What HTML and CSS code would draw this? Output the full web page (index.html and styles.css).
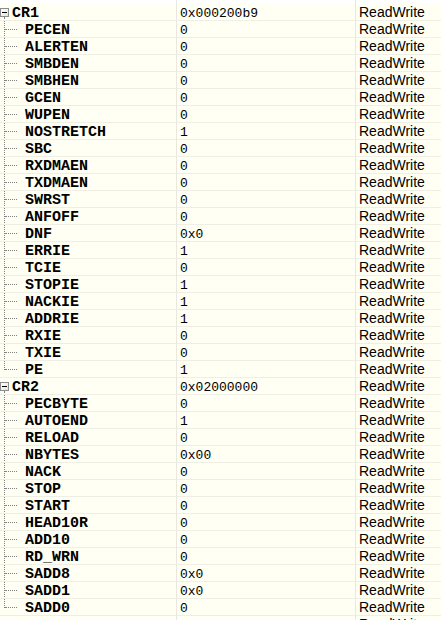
FILE: index.html
```html
<!DOCTYPE html>
<html>
<head>
<meta charset="utf-8">
<link rel="stylesheet" href="styles.css">
</head>
<body>
<div class="grid">
  <div class="row top"><div class="c name"></div><div class="c val"></div><div class="c acc"></div></div>

  <div class="row parent"><div class="c name"><span class="g"><span class="box"></span></span><span class="t">CR1</span></div><div class="c val">0x000200b9</div><div class="c acc">ReadWrite</div></div>
  <div class="row child"><div class="c name"><span class="g"></span><span class="t">PECEN</span></div><div class="c val">0</div><div class="c acc">ReadWrite</div></div>
  <div class="row child"><div class="c name"><span class="g"></span><span class="t">ALERTEN</span></div><div class="c val">0</div><div class="c acc">ReadWrite</div></div>
  <div class="row child"><div class="c name"><span class="g"></span><span class="t">SMBDEN</span></div><div class="c val">0</div><div class="c acc">ReadWrite</div></div>
  <div class="row child"><div class="c name"><span class="g"></span><span class="t">SMBHEN</span></div><div class="c val">0</div><div class="c acc">ReadWrite</div></div>
  <div class="row child"><div class="c name"><span class="g"></span><span class="t">GCEN</span></div><div class="c val">0</div><div class="c acc">ReadWrite</div></div>
  <div class="row child"><div class="c name"><span class="g"></span><span class="t">WUPEN</span></div><div class="c val">0</div><div class="c acc">ReadWrite</div></div>
  <div class="row child"><div class="c name"><span class="g"></span><span class="t">NOSTRETCH</span></div><div class="c val">1</div><div class="c acc">ReadWrite</div></div>
  <div class="row child"><div class="c name"><span class="g"></span><span class="t">SBC</span></div><div class="c val">0</div><div class="c acc">ReadWrite</div></div>
  <div class="row child"><div class="c name"><span class="g"></span><span class="t">RXDMAEN</span></div><div class="c val">0</div><div class="c acc">ReadWrite</div></div>
  <div class="row child"><div class="c name"><span class="g"></span><span class="t">TXDMAEN</span></div><div class="c val">0</div><div class="c acc">ReadWrite</div></div>
  <div class="row child"><div class="c name"><span class="g"></span><span class="t">SWRST</span></div><div class="c val">0</div><div class="c acc">ReadWrite</div></div>
  <div class="row child"><div class="c name"><span class="g"></span><span class="t">ANFOFF</span></div><div class="c val">0</div><div class="c acc">ReadWrite</div></div>
  <div class="row child"><div class="c name"><span class="g"></span><span class="t">DNF</span></div><div class="c val">0x0</div><div class="c acc">ReadWrite</div></div>
  <div class="row child"><div class="c name"><span class="g"></span><span class="t">ERRIE</span></div><div class="c val">1</div><div class="c acc">ReadWrite</div></div>
  <div class="row child"><div class="c name"><span class="g"></span><span class="t">TCIE</span></div><div class="c val">0</div><div class="c acc">ReadWrite</div></div>
  <div class="row child"><div class="c name"><span class="g"></span><span class="t">STOPIE</span></div><div class="c val">1</div><div class="c acc">ReadWrite</div></div>
  <div class="row child"><div class="c name"><span class="g"></span><span class="t">NACKIE</span></div><div class="c val">1</div><div class="c acc">ReadWrite</div></div>
  <div class="row child"><div class="c name"><span class="g"></span><span class="t">ADDRIE</span></div><div class="c val">1</div><div class="c acc">ReadWrite</div></div>
  <div class="row child"><div class="c name"><span class="g"></span><span class="t">RXIE</span></div><div class="c val">0</div><div class="c acc">ReadWrite</div></div>
  <div class="row child"><div class="c name"><span class="g"></span><span class="t">TXIE</span></div><div class="c val">0</div><div class="c acc">ReadWrite</div></div>
  <div class="row child last"><div class="c name"><span class="g"></span><span class="t">PE</span></div><div class="c val">1</div><div class="c acc">ReadWrite</div></div>

  <div class="row parent"><div class="c name"><span class="g"><span class="box"></span></span><span class="t">CR2</span></div><div class="c val">0x02000000</div><div class="c acc">ReadWrite</div></div>
  <div class="row child"><div class="c name"><span class="g"></span><span class="t">PECBYTE</span></div><div class="c val">0</div><div class="c acc">ReadWrite</div></div>
  <div class="row child"><div class="c name"><span class="g"></span><span class="t">AUTOEND</span></div><div class="c val">1</div><div class="c acc">ReadWrite</div></div>
  <div class="row child"><div class="c name"><span class="g"></span><span class="t">RELOAD</span></div><div class="c val">0</div><div class="c acc">ReadWrite</div></div>
  <div class="row child"><div class="c name"><span class="g"></span><span class="t">NBYTES</span></div><div class="c val">0x00</div><div class="c acc">ReadWrite</div></div>
  <div class="row child"><div class="c name"><span class="g"></span><span class="t">NACK</span></div><div class="c val">0</div><div class="c acc">ReadWrite</div></div>
  <div class="row child"><div class="c name"><span class="g"></span><span class="t">STOP</span></div><div class="c val">0</div><div class="c acc">ReadWrite</div></div>
  <div class="row child"><div class="c name"><span class="g"></span><span class="t">START</span></div><div class="c val">0</div><div class="c acc">ReadWrite</div></div>
  <div class="row child"><div class="c name"><span class="g"></span><span class="t">HEAD10R</span></div><div class="c val">0</div><div class="c acc">ReadWrite</div></div>
  <div class="row child"><div class="c name"><span class="g"></span><span class="t">ADD10</span></div><div class="c val">0</div><div class="c acc">ReadWrite</div></div>
  <div class="row child"><div class="c name"><span class="g"></span><span class="t">RD_WRN</span></div><div class="c val">0</div><div class="c acc">ReadWrite</div></div>
  <div class="row child"><div class="c name"><span class="g"></span><span class="t">SADD8</span></div><div class="c val">0x0</div><div class="c acc">ReadWrite</div></div>
  <div class="row child"><div class="c name"><span class="g"></span><span class="t">SADD1</span></div><div class="c val">0x0</div><div class="c acc">ReadWrite</div></div>
  <div class="row child last"><div class="c name"><span class="g"></span><span class="t">SADD0</span></div><div class="c val">0</div><div class="c acc">ReadWrite</div></div>
  <div class="row"><div class="c name"></div><div class="c val"></div><div class="c acc">ReadWrite</div></div>
</div>
</body>
</html>
```

FILE: styles.css
```css
html, body {
  margin: 0;
  padding: 0;
  background: #fffff3;
  overflow: hidden;
}
.grid {
  display: flex;
  flex-direction: column;
  width: 441px;
}
.row {
  display: flex;
  height: 17px;
  flex: none;
}
.row.top {
  height: 4px;
  background: #ffffff;
}
.row.top .c {
  border-bottom: none;
}
.c {
  box-sizing: border-box;
  height: 100%;
  border-bottom: 1px solid #efefe6;
  white-space: nowrap;
  overflow: hidden;
}
.name {
  width: 177px;
  border-right: 1px solid #e8e8e0;
  display: flex;
  align-items: stretch;
  font-family: "Liberation Mono", monospace;
  font-weight: bold;
  font-size: 15px;
  line-height: 16px;
  color: #000;
}
.name .t {
  padding-top: 2px;
}
.val {
  width: 179px;
  border-right: 1px solid #e8e8e0;
  padding-left: 3px;
  padding-top: 2px;
  font-family: "Liberation Mono", monospace;
  font-size: 13px;
  line-height: 15px;
  color: #000;
}
.acc {
  flex: 1;
  padding-left: 3px;
  font-family: "Liberation Sans", Arial, sans-serif;
  font-size: 14px;
  line-height: 17px;
  color: #000;
}
.g {
  position: relative;
  flex: none;
  height: 17px;
}
.parent .g {
  width: 12px;
}
.child .g {
  width: 25px;
}
.child .g::before {
  content: "";
  position: absolute;
  left: 4px;
  top: -1px;
  height: 18px;
  border-left: 1px dotted #808080;
}
.child.last .g::before {
  height: 10px;
}
.child .g::after {
  content: "";
  position: absolute;
  left: 5px;
  top: 8px;
  width: 12px;
  border-top: 1px dotted #808080;
}
.parent .g::after {
  content: "";
  position: absolute;
  left: 4px;
  top: 13px;
  height: 4px;
  border-left: 1px dotted #808080;
}
.box {
  position: absolute;
  left: 0;
  top: 4px;
  width: 9px;
  height: 9px;
  box-sizing: border-box;
  border: 1px solid #8c8c8c;
  background: linear-gradient(135deg, #ffffff 0%, #e4e4dc 100%);
}
.box::after {
  content: "";
  position: absolute;
  left: 1px;
  top: 3px;
  width: 5px;
  height: 1px;
  background: #000;
}
.t {
  display: block;
}
```
